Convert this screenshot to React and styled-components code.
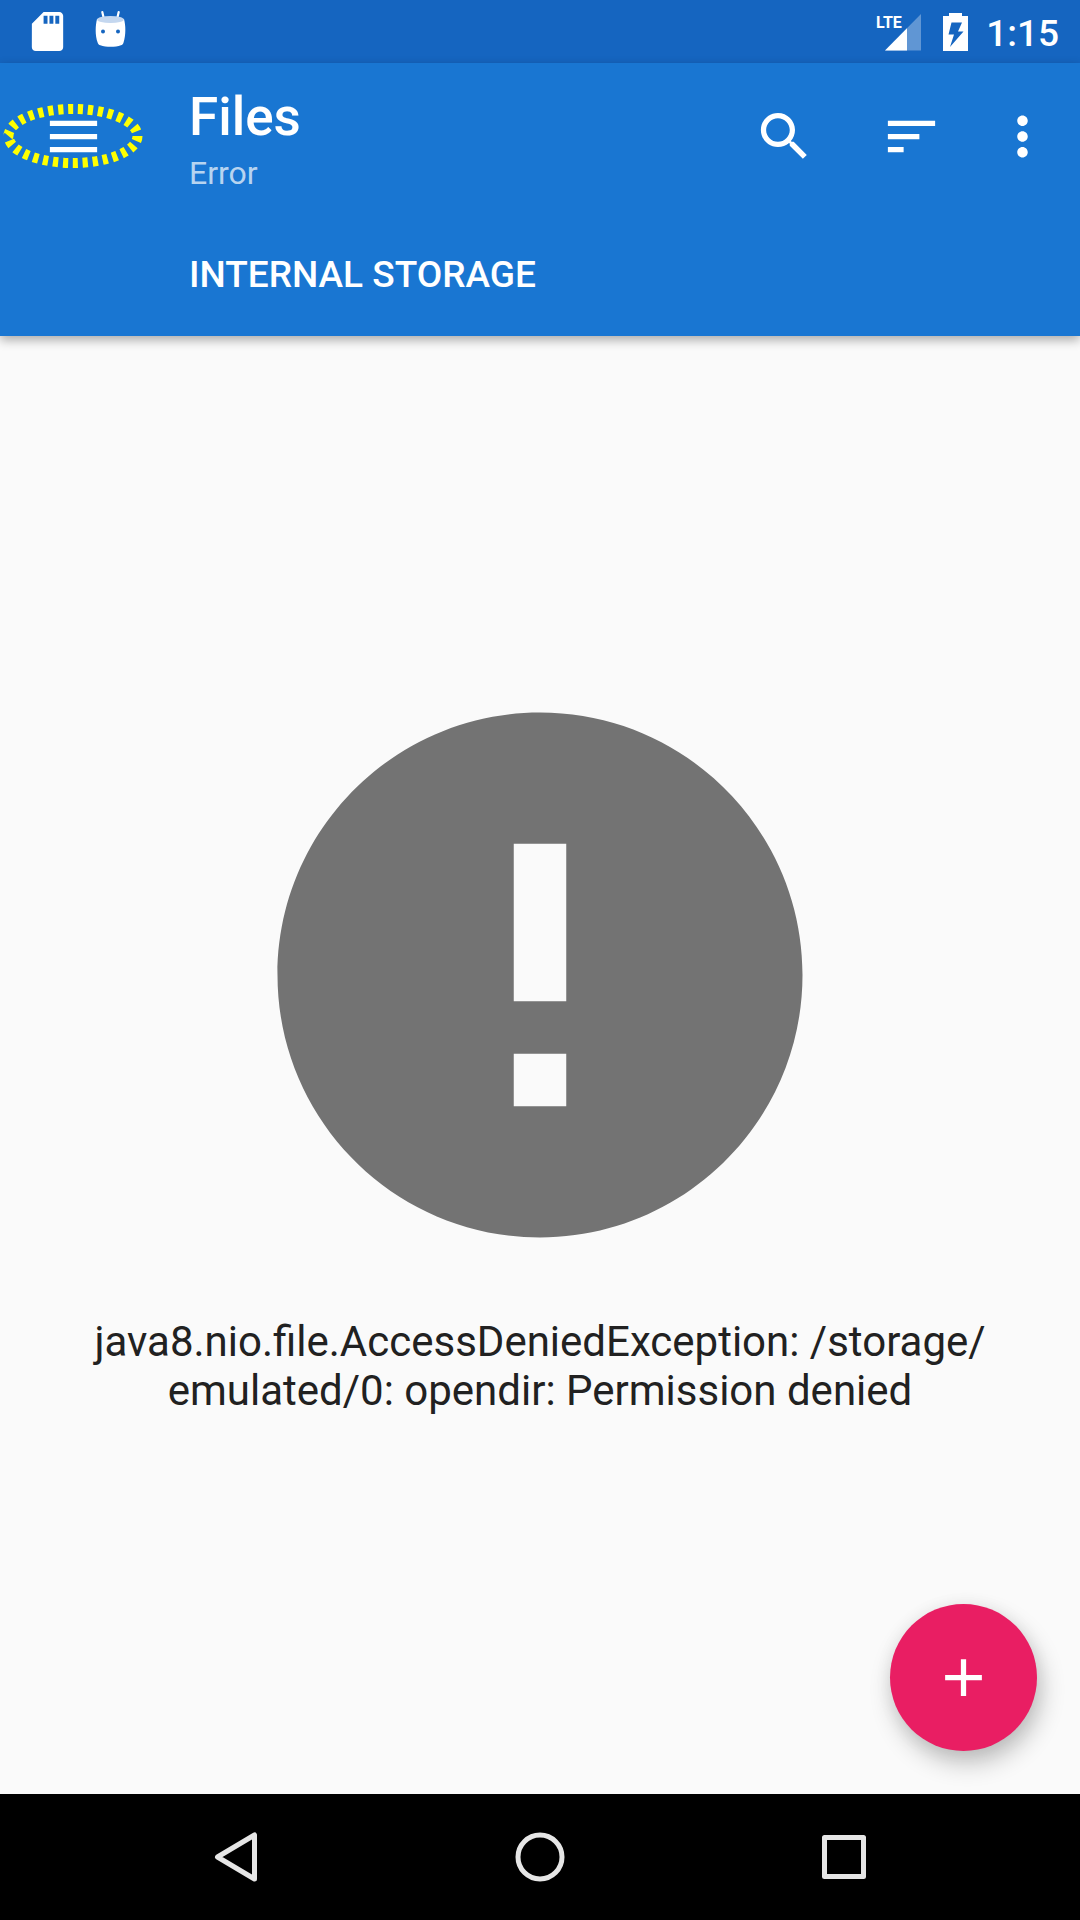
import React from "react";
import styled, { createGlobalStyle } from "styled-components";

const GlobalStyle = createGlobalStyle`
  *, *::before, *::after { box-sizing: border-box; }
  body {
    margin: 0;
    background: #fafafa;
    font-family: Roboto, "Noto Sans", sans-serif;
  }
  button {
    padding: 0;
    border: 0;
    background: none;
    color: inherit;
    font: inherit;
    cursor: pointer;
  }
`;

const Screen = styled.div`
  display: flex;
  flex-direction: column;
  min-height: 100vh;
`;

const StatusBar = styled.div`
  display: flex;
  align-items: center;
  justify-content: space-between;
  height: 63px;
  padding: 0 21px 0 24px;
  background: #1565c0;
  color: #fff;
`;

const StatusGroup = styled.div`
  display: flex;
  align-items: center;
  gap: ${(p) => p.$gap}px;
`;

const Clock = styled.time`
  font-size: 37px;
  line-height: 44px;
  font-weight: 500;
  padding-top: 4px;
`;

const AppBar = styled.header`
  position: relative;
  background: #1976d2;
  color: #fff;
  box-shadow: 0 4px 10px rgba(0, 0, 0, 0.32);
`;

const Toolbar = styled.div`
  display: flex;
  align-items: center;
  height: 147px;
  padding: 0 26px 0 42px;
`;

const IconButton = styled.button`
  position: relative;
  display: flex;
  width: 63px;
  height: 63px;
`;

const Highlight = styled.svg`
  position: absolute;
  top: 50%;
  left: 50%;
  transform: translate(-50%, -50%);
  pointer-events: none;
`;

const Heading = styled.div`
  flex: 1;
  margin-left: 84px;
  padding-top: 2px;
`;

const Title = styled.h1`
  margin: 0;
  font-size: 53px;
  line-height: 70px;
  font-weight: 500;
`;

const Subtitle = styled.p`
  margin: 0;
  font-size: 32px;
  line-height: 42px;
  color: rgba(255, 255, 255, 0.7);
`;

const Actions = styled.div`
  display: flex;
  gap: 64px;
`;

const OverflowButton = styled(IconButton)`
  margin-left: 48px;
`;

const Breadcrumbs = styled.nav`
  display: flex;
  padding-left: 189px;
`;

const Crumb = styled.button`
  height: 126px;
  padding-top: 2px;
  font-size: 37px;
  font-weight: 500;
  text-transform: uppercase;
`;

const Content = styled.main`
  position: relative;
  flex: 1;
  display: flex;
  flex-direction: column;
  align-items: center;
  justify-content: center;
  padding: 0 63px 55px;
`;

const Message = styled.p`
  margin: 27px 0 0;
  font-size: 42px;
  line-height: 49px;
  text-align: center;
  color: #212121;
`;

const Fab = styled.button`
  position: absolute;
  right: 43px;
  bottom: 43px;
  display: flex;
  align-items: center;
  justify-content: center;
  width: 147px;
  height: 147px;
  border-radius: 50%;
  background: #e91e63;
  color: #fff;
  box-shadow: 4px 12px 24px rgba(0, 0, 0, 0.24), 0 2px 18px rgba(0, 0, 0, 0.06);
`;

const NavBar = styled.nav`
  display: grid;
  grid-template-columns: repeat(3, 1fr);
  height: 126px;
  padding: 0 84px;
  background: #000;
  color: #e6e6e6;
`;

const NavButton = styled.button`
  display: flex;
  align-items: center;
  justify-content: center;
`;

const SignalLabel = styled.text`
  font-family: "Liberation Sans Narrow", Roboto, sans-serif;
  font-size: 16px;
  font-weight: 700;
`;

function MaterialIcon({ path, size = 63 }) {
  return (
    <svg width={size} height={size} viewBox="0 0 24 24" fill="currentColor" aria-hidden="true">
      <path d={path} />
    </svg>
  );
}

const icons = {
  sdCard:
    "M18 2h-8L4.020 8 4 20c0 1.100.9 2 2 2h12c1.100 0 2-.9 2-2V4c0-1.100-.9-2-2-2zm-6 6h-2V4h2v4zm3 0h-2V4h2v4zm3 0h-2V4h2v4z",
  menu: "M3 18h18v-2H3v2zm0-5h18v-2H3v2zm0-7v2h18V6H3z",
  search:
    "M15.500 14h-.79l-.28-.27C15.410 12.590 16 11.110 16 9.500 16 5.910 13.090 3 9.500 3S3 5.910 3 9.500 5.910 16 9.500 16c1.610 0 3.090-.59 4.230-1.570l.27.28v.79l5 4.990L20.490 19l-4.990-5zm-6 0C7.010 14 5 11.990 5 9.500S7.010 5 9.500 5 14 7.010 14 9.500 11.990 14 9.500 14z",
  sort: "M3 18h6v-2H3v2zM3 6v2h18V6H3zm0 7h12v-2H3v2z",
  more: "M12 8c1.100 0 2-.9 2-2s-.9-2-2-2-2 .9-2 2 .9 2 2 2zm0 2c-1.100 0-2 .9-2 2s.9 2 2 2 2-.9 2-2-.9-2-2-2zm0 6c-1.100 0-2 .9-2 2s.9 2 2 2 2-.9 2-2-.9-2-2-2z",
  error: "M12 2C6.480 2 2 6.480 2 12s4.480 10 10 10 10-4.480 10-10S17.520 2 12 2zm1 15h-2v-2h2v2zm0-4h-2V7h2v6z",
  add: "M19 13h-6v6h-2v-6H5v-2h6V5h2v6h6v2z",
};

function DroidIcon() {
  return (
    <svg width="47" height="47" viewBox="0 0 47 47" aria-hidden="true">
      <path d="M15.300 4l1.600 7M31.700 4l-1.600 7" stroke="#fff" strokeWidth="2.200" strokeLinecap="round" />
      <path
        d="M10 11c-1.500 6-2.200 16 .8 24 .4 1.300 1.200 1.900 2.500 2.300 6 2 15 2 20.600 0 1.300-.4 2.100-1 2.500-2.300 2.700-8 2.300-18 .6-24z"
        fill="#fff"
      />
      <ellipse cx="23.500" cy="11.500" rx="13.400" ry="3.600" fill="#c4d7ef" />
      <circle cx="16" cy="23.500" r="2" fill="#1565c0" />
      <circle cx="31" cy="23.500" r="2" fill="#1565c0" />
    </svg>
  );
}

function SignalIcon() {
  return (
    <svg width="46" height="38" viewBox="0 0 46 38" fill="#fff" role="img" aria-label="LTE signal">
      <path d="M45 1v36.500H9z" opacity="0.32" />
      <path d="M31 15.200v22.300H9z" />
      <SignalLabel x="0" y="15">LTE</SignalLabel>
    </svg>
  );
}

function BatteryIcon() {
  return (
    <svg width="25" height="38" viewBox="0 0 25 38" role="img" aria-label="Battery charging">
      <path d="M6 0h13v3h6v35H0V3h6z" fill="#fff" />
      <path d="M8.500 9.500h10.500l-4 9h5.500L7 34l4-12.500H5.500z" fill="#1565c0" />
    </svg>
  );
}

export default function App() {
  return (
    <Screen>
      <GlobalStyle />
      <StatusBar>
        <StatusGroup $gap={16}>
          <MaterialIcon path={icons.sdCard} size={47} />
          <DroidIcon />
        </StatusGroup>
        <StatusGroup $gap={18}>
          <StatusGroup $gap={21}>
            <SignalIcon />
            <BatteryIcon />
          </StatusGroup>
          <Clock>1:15</Clock>
        </StatusGroup>
      </StatusBar>

      <AppBar>
        <Toolbar>
          <IconButton aria-label="Open navigation menu">
            <MaterialIcon path={icons.menu} />
            <Highlight width="144" height="68" viewBox="0 0 144 68" aria-hidden="true">
              <ellipse
                cx="71"
                cy="33"
                rx="64.500"
                ry="27"
                pathLength="300"
                fill="none"
                stroke="#ff0"
                strokeWidth="10"
                strokeDasharray="5.200 4.800"
              />
            </Highlight>
          </IconButton>
          <Heading>
            <Title>Files</Title>
            <Subtitle>Error</Subtitle>
          </Heading>
          <Actions>
            <IconButton aria-label="Search">
              <MaterialIcon path={icons.search} />
            </IconButton>
            <IconButton aria-label="Sort">
              <MaterialIcon path={icons.sort} />
            </IconButton>
          </Actions>
          <OverflowButton aria-label="More options">
            <MaterialIcon path={icons.more} />
          </OverflowButton>
        </Toolbar>
        <Breadcrumbs aria-label="Path">
          <Crumb>Internal storage</Crumb>
        </Breadcrumbs>
      </AppBar>

      <Content>
        <svg width="630" height="630" viewBox="0 0 24 24" fill="#737373" aria-hidden="true">
          <path d={icons.error} />
        </svg>
        <Message>
          java8.nio.file.AccessDeniedException: /storage/<wbr />emulated/0: opendir: Permission denied
        </Message>
        <Fab aria-label="Add">
          <MaterialIcon path={icons.add} />
        </Fab>
      </Content>

      <NavBar aria-label="System">
        <NavButton aria-label="Back">
          <svg width="50" height="50" viewBox="0 0 50 50" fill="none" stroke="currentColor" strokeWidth="5" strokeLinejoin="round">
            <path d="M43.500 3v44L6.500 25z" />
          </svg>
        </NavButton>
        <NavButton aria-label="Home">
          <svg width="50" height="50" viewBox="0 0 50 50" fill="none" stroke="currentColor" strokeWidth="5">
            <circle cx="25" cy="25" r="22" />
          </svg>
        </NavButton>
        <NavButton aria-label="Recent apps">
          <svg width="50" height="50" viewBox="0 0 50 50" fill="none" stroke="currentColor" strokeWidth="5" strokeLinejoin="round">
            <path d="M5.500 5.500h39v39h-39z" />
          </svg>
        </NavButton>
      </NavBar>
    </Screen>
  );
}
